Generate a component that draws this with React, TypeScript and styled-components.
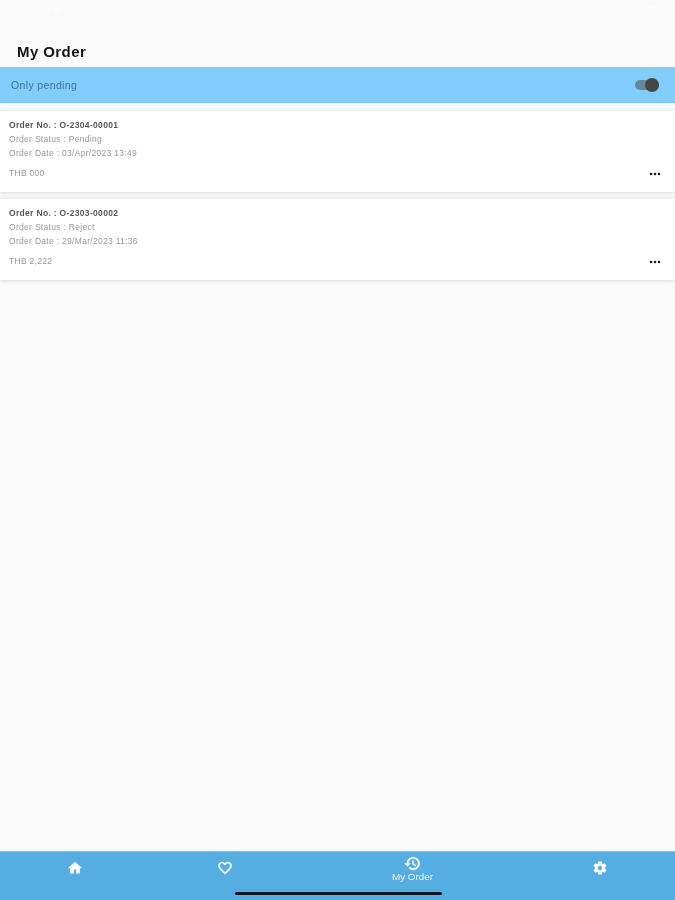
import React from "react";
import styled, { createGlobalStyle } from "styled-components";

const Global = createGlobalStyle`
  html, body { margin: 0; padding: 0; background: #fafafa; }
  body { font-family: "Liberation Sans", Arial, sans-serif; }
  * { box-sizing: border-box; }
`;

const Page = styled.div`
  position: relative;
  width: 675px;
  height: 900px;
  display: flex;
  flex-direction: column;
  background: #fafafa;
  overflow: hidden;
`;

const StatusBar = styled.div`
  height: 14px;
  padding: 3px 12px 0 16px;
  display: flex;
  justify-content: space-between;
  align-items: center;
  font-size: 6px;
  color: #ffffff;
  filter: blur(0.4px);
`;

const Header = styled.header`
  height: 53px;
  padding: 0 16px 6px 17px;
  display: flex;
  align-items: flex-end;
`;

const Title = styled.h1`
  margin: 0;
  font-size: 15px;
  line-height: 18px;
  font-weight: 700;
  letter-spacing: 0.42px;
  color: #141414;
  filter: blur(0.35px);
`;

const FilterBar = styled.div`
  height: 36px;
  padding: 0 16px 0 11px;
  display: flex;
  align-items: center;
  justify-content: space-between;
  background: #81cdfe;
  border-bottom: 1px solid #74c4fb;
`;

const FilterLabel = styled.span`
  font-size: 10.5px;
  letter-spacing: 0.36px;
  color: #3f7597;
  filter: blur(0.45px);
`;

const Toggle = styled.div`
  position: relative;
  width: 24px;
  height: 10px;
  border-radius: 5px;
  background: #64899f;
  filter: blur(0.4px);
`;

const Knob = styled.div`
  position: absolute;
  right: 0;
  top: -2px;
  width: 14px;
  height: 14px;
  border-radius: 50%;
  background: #444648;
`;

const OrderList = styled.main`
  flex: 1;
  padding-top: 7px;
  display: flex;
  flex-direction: column;
  gap: 6px;
`;

const OrderCard = styled.article`
  height: 82px;
  padding: 7px 9px 0;
  background: #ffffff;
  border-top: 1px solid #eeeeee;
  box-shadow: 0 1px 4px rgba(0, 0, 0, 0.14);
  display: flex;
  flex-direction: column;
`;

const OrderLine = styled.div<{ $strong?: boolean }>`
  height: 14px;
  font-size: 8.5px;
  line-height: 14px;
  letter-spacing: ${(p) => (p.$strong ? 0.32 : 0.3)}px;
  color: ${(p) => (p.$strong ? "#55585c" : "#979797")};
  font-weight: ${(p) => (p.$strong ? 700 : 400)};
  filter: blur(0.45px);
`;

const PriceRow = styled.div`
  margin-top: 6px;
  padding-right: 5px;
  display: flex;
  align-items: center;
  justify-content: space-between;
  height: 14px;
`;

const Price = styled.span`
  font-size: 8.5px;
  letter-spacing: 0.3px;
  color: #979797;
  filter: blur(0.45px);
`;

const MoreIcon = styled.svg`
  width: 12px;
  height: 4px;
  margin-top: 2px;
  fill: #1c1c1c;
`;

const BottomNav = styled.nav`
  height: 49px;
  display: flex;
  background: #56ade2;
  border-top: 1px solid #7fc0e8;
`;

const Tab = styled.div<{ $active?: boolean }>`
  flex: ${(p) => (p.$active ? 3 : 2)} 1 0;
  padding-top: ${(p) => (p.$active ? 3 : 8)}px;
  display: flex;
  flex-direction: column;
  align-items: center;
  color: #ffffff;
`;

const TabIcon = styled.svg<{ $large?: boolean }>`
  width: ${(p) => (p.$large ? 17 : 16)}px;
  height: ${(p) => (p.$large ? 17 : 16)}px;
  fill: #ffffff;
  stroke: #ffffff;
  stroke-width: 0.6;
  filter: blur(0.25px);
`;

const TabLabel = styled.span`
  font-size: 9.8px;
  line-height: 11px;
  margin-top: -1px;
  color: #eef7fc;
  filter: blur(0.4px);
`;

const HomeIndicator = styled.div`
  position: absolute;
  left: 235px;
  bottom: 5px;
  width: 207px;
  height: 3px;
  border-radius: 2px;
  background: #0b1520;
`;

const icons = {
  home: "M10 20v-6h4v6h5v-8h3L12 3 2 12h3v8z",
  heart:
    "M16.5 3c-1.74 0-3.41.81-4.5 2.09C10.91 3.81 9.24 3 7.5 3 4.42 3 2 5.42 2 8.5c0 3.78 3.4 6.86 8.55 11.54L12 21.35l1.45-1.32C18.6 15.36 22 12.28 22 8.5 22 5.42 19.58 3 16.5 3zm-4.4 15.55l-.1.1-.1-.1C7.14 14.24 4 11.39 4 8.5 4 6.5 5.5 5 7.5 5c1.54 0 3.04.99 3.57 2.36h1.87C13.46 5.99 14.96 5 16.5 5c2 0 3.5 1.5 3.5 3.5 0 2.89-3.14 5.74-7.9 10.05z",
  history:
    "M13 3c-4.97 0-9 4.03-9 9H1l3.89 3.89.07.14L9 12H6c0-3.87 3.13-7 7-7s7 3.13 7 7-3.13 7-7 7c-1.93 0-3.68-.79-4.94-2.06l-1.42 1.42C8.27 19.99 10.51 21 13 21c4.97 0 9-4.03 9-9s-4.03-9-9-9zm-1 5v5l4.28 2.54.72-1.21-3.5-2.08V8H12z",
  settings:
    "M19.14 12.94c.04-.3.06-.61.06-.94 0-.32-.02-.64-.07-.94l2.03-1.58c.18-.14.23-.41.12-.61l-1.92-3.32c-.12-.22-.37-.29-.59-.22l-2.39.96c-.5-.38-1.03-.7-1.62-.94l-.36-2.54c-.04-.24-.24-.41-.48-.41h-3.84c-.24 0-.43.17-.47.41l-.36 2.54c-.59.24-1.13.57-1.62.94l-2.39-.96c-.22-.08-.47 0-.59.22L2.74 8.87c-.12.21-.08.47.12.61l2.03 1.58c-.05.3-.09.63-.09.94s.02.64.07.94l-2.03 1.58c-.18.14-.23.41-.12.61l1.92 3.32c.12.22.37.29.59.22l2.39-.96c.5.38 1.03.7 1.62.94l.36 2.54c.05.24.24.41.48.41h3.84c.24 0 .44-.17.47-.41l.36-2.54c.59-.24 1.13-.56 1.62-.94l2.39.96c.22.08.47 0 .59-.22l1.92-3.32c.12-.22.07-.47-.12-.61l-2.01-1.58zM12 15.6c-1.98 0-3.6-1.62-3.6-3.6s1.62-3.6 3.6-3.6 3.6 1.62 3.6 3.6-1.62 3.6-3.6 3.6z",
};

const orders = [
  { no: "O-2304-00001", status: "Pending", date: "03/Apr/2023 13:49", price: "THB 000" },
  { no: "O-2303-00002", status: "Reject", date: "29/Mar/2023 11:36", price: "THB 2,222" },
];

const tabs = [
  { icon: icons.home },
  { icon: icons.heart },
  { icon: icons.history, label: "My Order" },
  { icon: icons.settings },
];

export default function App() {
  return (
    <Page>
      <Global />
      <StatusBar>
        <span>9:41 AM  Mon Apr 3</span>
        <span>100%</span>
      </StatusBar>
      <Header>
        <Title>My Order</Title>
      </Header>
      <FilterBar>
        <FilterLabel>Only pending</FilterLabel>
        <Toggle>
          <Knob />
        </Toggle>
      </FilterBar>
      <OrderList>
        {orders.map((o) => (
          <OrderCard key={o.no}>
            <OrderLine $strong>Order No. : {o.no}</OrderLine>
            <OrderLine>Order Status : {o.status}</OrderLine>
            <OrderLine>Order Date : {o.date}</OrderLine>
            <PriceRow>
              <Price>{o.price}</Price>
              <MoreIcon viewBox="0 0 12 4">
                <circle cx="2" cy="2" r="1.3" />
                <circle cx="6" cy="2" r="1.3" />
                <circle cx="10" cy="2" r="1.3" />
              </MoreIcon>
            </PriceRow>
          </OrderCard>
        ))}
      </OrderList>
      <BottomNav>
        {tabs.map((t, i) => (
          <Tab key={i} $active={!!t.label}>
            <TabIcon viewBox="0 0 24 24" $large={!!t.label}>
              <path d={t.icon} />
            </TabIcon>
            {t.label && <TabLabel>{t.label}</TabLabel>}
          </Tab>
        ))}
      </BottomNav>
      <HomeIndicator />
    </Page>
  );
}
